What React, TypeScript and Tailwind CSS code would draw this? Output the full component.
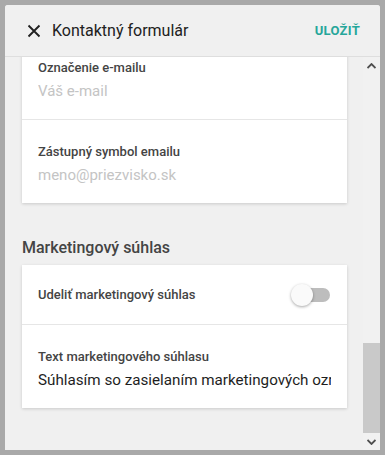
const font = { fontFamily: "Roboto, 'Noto Sans', sans-serif" };

const Field = ({ label, value, placeholder }: { label: string; value?: string; placeholder?: string }) => (
    <section className="h-[83px] px-4 pt-[24px] flex flex-col gap-[5px] overflow-hidden">
        <p className="text-[13px] leading-4 font-medium text-[#444444]">{label}</p>
        <input
            readOnly
            value={value ?? ""}
            placeholder={placeholder}
            className={
                placeholder
                    ? "w-full h-5 text-[15px] leading-5 outline-none bg-transparent placeholder:text-[#c4c4c4]"
                    : "w-full h-5 text-[15.2px] leading-5 outline-none bg-transparent text-[#1e1e1e]"
            }
        />
    </section>
);

const Toggle = () => (
    <section className="relative w-[34px] h-[14px] rounded-full bg-[#bdbdbd]">
        <section className="absolute -left-[5px] -top-[4px] w-[22px] h-[22px] rounded-full bg-[#fafafa] shadow-[0_1px_3px_rgba(0,0,0,0.35)]" />
    </section>
);

const App = () => {
    return (
        <section className="w-[385px] h-[455px] bg-[#a9a9a9] p-[5px]" style={font}>
            <section className="w-full h-full flex flex-col bg-[#f0f0f0] rounded-tl-[3px] rounded-tr-[3px] overflow-hidden">
                <header className="h-[52px] shrink-0 flex items-center justify-between pl-[20px] pr-[20px] border-b border-[#dedede] bg-[#f0f0f0]">
                    <section className="flex items-center gap-[9px]">
                        <svg width="18" height="18" viewBox="0 0 18 18" className="text-[#212121]">
                            <path d="M3.5 3.5 L14.5 14.5 M14.5 3.5 L3.5 14.5" stroke="currentColor" strokeWidth="1.9" />
                        </svg>
                        <p className="text-[16px] leading-5 text-[#212121]">Kontaktný formulár</p>
                    </section>
                    <p className="text-[13px] font-bold tracking-[0.3px] text-[#26a69a]">ULOŽIŤ</p>
                </header>
                <section className="flex-1 flex min-h-0">
                    <section className="flex-1 overflow-hidden pl-[17px] pr-[16px]">
                        <section className="-mt-[21px] bg-white shadow-[0_1px_3px_rgba(0,0,0,0.16)]">
                            <Field label="Označenie e-mailu" placeholder="Váš e-mail" />
                            <section className="border-t border-[#e6e6e6]">
                                <Field label="Zástupný symbol emailu" placeholder="meno@priezvisko.sk" />
                            </section>
                        </section>
                        <p className="mt-[35px] text-[16px] leading-5 font-medium text-[#444444]">Marketingový súhlas</p>
                        <section className="mt-[7px] bg-white shadow-[0_1px_3px_rgba(0,0,0,0.16)]">
                            <section className="h-[59px] px-4 pr-[17px] flex items-center justify-between">
                                <p className="text-[13px] leading-4 font-medium text-[#444444]">Udeliť marketingový súhlas</p>
                                <Toggle />
                            </section>
                            <section className="border-t border-[#e6e6e6]">
                                <Field label="Text marketingového súhlasu" value="Súhlasím so zasielaním marketingových ozrejmení" />
                            </section>
                        </section>
                    </section>
                    <section className="w-[17px] shrink-0 flex flex-col bg-[#f1f1f1]">
                        <section className="h-[17px] flex items-center justify-center">
                            <svg width="9" height="6" viewBox="0 0 9 6">
                                <path d="M0.5 5 L4.5 1 L8.5 5" stroke="#505050" strokeWidth="1.8" fill="none" />
                            </svg>
                        </section>
                        <section className="flex-1 flex flex-col justify-end">
                            <section className="h-[90px] bg-[#c9c9c9]" />
                        </section>
                        <section className="h-[17px] flex items-center justify-center">
                            <svg width="9" height="6" viewBox="0 0 9 6">
                                <path d="M0.5 1 L4.5 5 L8.5 1" stroke="#505050" strokeWidth="1.8" fill="none" />
                            </svg>
                        </section>
                    </section>
                </section>
            </section>
        </section>
    );
};

export default App;
